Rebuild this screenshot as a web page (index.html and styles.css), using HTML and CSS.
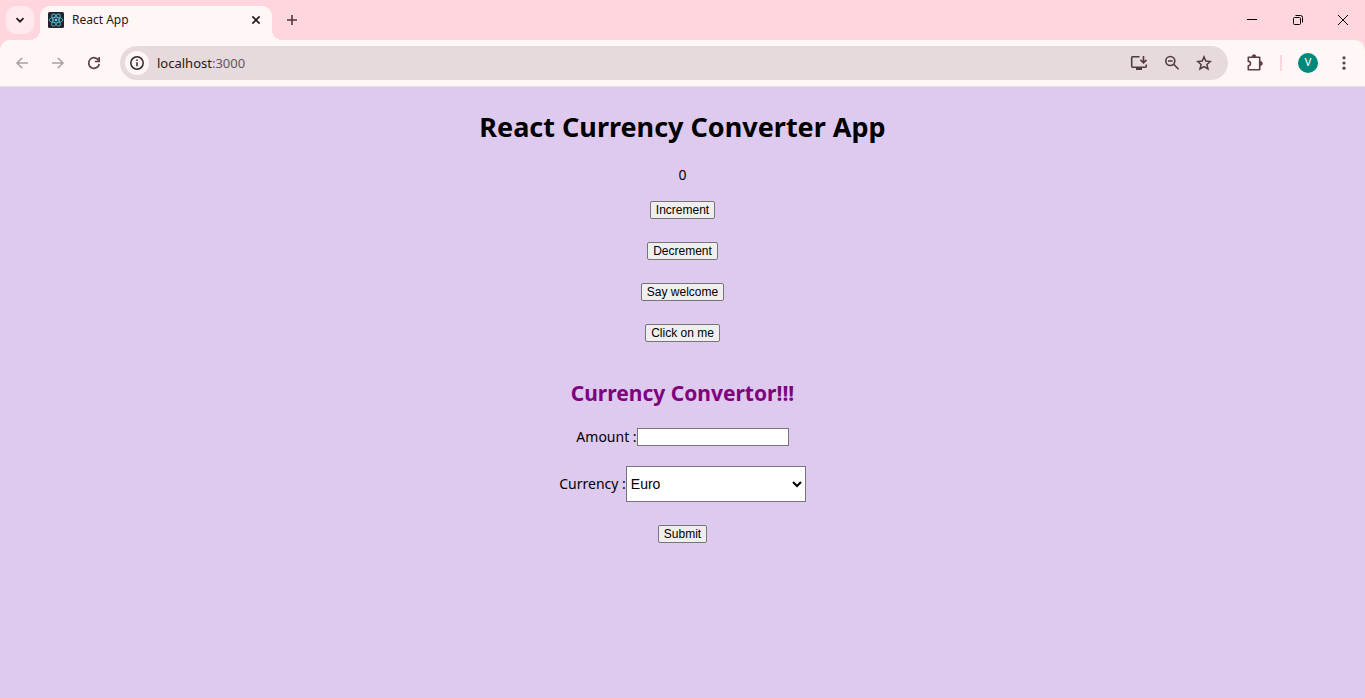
FILE: index.html
```
<!DOCTYPE html>
<html lang="en">
<head>
<meta charset="utf-8">
<title>React App</title>
<link rel="stylesheet" href="styles.css">
</head>
<body>
<header class="browser">
  <div class="tabstrip">
    <button class="tab-search" aria-label="Search tabs"><svg width="10" height="10" viewBox="0 0 10 10"><path d="M1.5 3.2 5 6.7l3.5-3.5" fill="none" stroke="#24191c" stroke-width="1.8"/></svg></button>
    <div class="tab">
      <svg class="favicon" width="16" height="16" viewBox="0 0 16 16"><rect width="16" height="16" rx="1.5" fill="#20232a"/><g fill="none" stroke="#4fb3cf" stroke-width=".9"><ellipse cx="8" cy="8" rx="6.8" ry="2.7"/><ellipse cx="8" cy="8" rx="6.8" ry="2.7" transform="rotate(60 8 8)"/><ellipse cx="8" cy="8" rx="6.8" ry="2.7" transform="rotate(120 8 8)"/></g><circle cx="8" cy="8" r="1.3" fill="#61dafb"/></svg>
      <span class="tab-title">React App</span>
      <button class="icon-button tab-close" aria-label="Close tab"><svg width="16" height="16" viewBox="0 0 16 16"><path d="m4.4 4.4 7.2 7.2m0-7.2-7.2 7.2" stroke="#24191c" stroke-width="1.6"/></svg></button>
    </div>
    <button class="icon-button new-tab" aria-label="New tab"><svg width="16" height="16" viewBox="0 0 16 16"><path d="M8 3v10M3 8h10" stroke="#50393f" stroke-width="1.6"/></svg></button>
    <div class="window-controls">
      <button aria-label="Minimize"><svg width="12" height="12" viewBox="0 0 12 12"><path d="M1 5.5h10" stroke="#000"/></svg></button>
      <button aria-label="Restore"><svg width="12" height="12" viewBox="0 0 12 12"><rect x="1.5" y="3.5" width="7" height="7" rx="1" fill="none" stroke="#000"/><path d="M3.5 1.5h5a2 2 0 0 1 2 2v5" fill="none" stroke="#000"/></svg></button>
      <button aria-label="Close"><svg width="12" height="12" viewBox="0 0 12 12"><path d="m1 1 10 10M11 1 1 11" stroke="#000"/></svg></button>
    </div>
  </div>
  <div class="toolbar">
    <nav class="nav">
      <button class="icon-button" aria-label="Back" disabled><svg width="16" height="16" viewBox="0 0 16 16"><path d="M14 8H3m5.3-5.3L3 8l5.3 5.3" fill="none" stroke="#aaa0a1" stroke-width="1.5"/></svg></button>
      <button class="icon-button" aria-label="Forward" disabled><svg width="16" height="16" viewBox="0 0 16 16"><path d="M2 8h11M7.700 2.700 13 8l-5.300 5.300" fill="none" stroke="#aaa0a1" stroke-width="1.5"/></svg></button>
      <button class="icon-button" aria-label="Reload"><svg width="16" height="16" viewBox="0 0 16 16"><path d="M12.700 5.600A5.300 5.300 0 1 0 13.200 9" fill="none" stroke="#5a3f46" stroke-width="1.7"/><path d="M13.200 2v4.500H8.800" fill="none" stroke="#5a3f46" stroke-width="1.7"/></svg></button>
    </nav>
    <div class="omnibox">
      <button class="site-info" aria-label="Site information"><svg width="16" height="16" viewBox="0 0 16 16"><circle cx="8" cy="8" r="6.200" fill="none" stroke="#332529" stroke-width="1.5"/><path d="M8 7.200v4M8 4.500v1.600" stroke="#332529" stroke-width="1.5"/></svg></button>
      <label class="url"><input type="text" value="localhost:3000" aria-label="Address"><span class="url-text" aria-hidden="true">localhost<span class="port">:3000</span></span></label>
      <button class="icon-button" aria-label="Install"><svg width="18" height="18" viewBox="0 0 18 18"><path d="M9.500 2.800H2.700a1 1 0 0 0-1 1v8.500a1 1 0 0 0 1 1h12.600a1 1 0 0 0 1-1V10.500" fill="none" stroke="#50393f" stroke-width="1.600"/><path d="M6 13h6v3H6z" fill="#50393f"/><path d="M13.500 2v6.700m-3-2.800 3 3 3-3" fill="none" stroke="#50393f" stroke-width="1.600"/></svg></button>
      <button class="icon-button" aria-label="Zoom"><svg width="16" height="16" viewBox="0 0 16 16"><circle cx="6.300" cy="6" r="4.500" fill="none" stroke="#50393f" stroke-width="1.600"/><path d="M4 6h4.600M9.600 9.300l5 5" stroke="#50393f" stroke-width="1.600"/></svg></button>
      <button class="icon-button" aria-label="Bookmark"><svg width="16" height="16" viewBox="0 0 16 16"><path d="m8 1.900 1.800 4.200 4.600.4-3.500 3 1.100 4.500L8 11.600 4 14l1.100-4.500-3.500-3 4.600-.4z" fill="none" stroke="#50393f" stroke-width="1.500"/></svg></button>
    </div>
    <div class="actions">
      <button class="icon-button" aria-label="Extensions"><svg width="18" height="18" viewBox="0 0 18 18"><path d="M2.300 3.300h11.400v12.400H2.300v-3.900a2.200 2.200 0 0 0 0-4.400z" fill="none" stroke="#5a3f46" stroke-width="1.600" stroke-linejoin="round"/><path d="M6 2.800a2 2 0 0 1 4 0zM14.300 7.500a2 2 0 0 1 0 4z" fill="#5a3f46" stroke="#5a3f46"/></svg></button>
      <span class="divider"></span>
      <button class="avatar" aria-label="Profile">V</button>
      <button class="icon-button menu" aria-label="Menu"><svg width="16" height="16" viewBox="0 0 16 16" fill="#5a3f46"><circle cx="8" cy="2.800" r="1.600"/><circle cx="8" cy="8" r="1.600"/><circle cx="8" cy="13.200" r="1.600"/></svg></button>
    </div>
  </div>
</header>
<main class="page">
  <h1 class="title">React Currency Converter App</h1>
  <output class="count">0</output>
  <div class="buttons">
    <button class="button">Increment</button>
    <button class="button">Decrement</button>
    <button class="button">Say welcome</button>
    <button class="button">Click on me</button>
  </div>
  <h2 class="subtitle">Currency Convertor!!!</h2>
  <form class="form">
    <div class="field"><label for="amount">Amount :</label><input class="amount" id="amount" type="text"></div>
    <div class="field"><label for="currency">Currency :</label><select class="currency" id="currency"><option>Euro</option></select></div>
    <button class="button submit" type="button">Submit</button>
  </form>
</main>
</body>
</html>
```
FILE: styles.css
```
* { box-sizing: border-box; }
body {
  margin: 0;
  min-height: 100vh;
  background: #decaee;
  color: #000;
  font: 14px/20px "Noto Sans", "Open Sans", sans-serif;
}
svg { display: block; flex: none; }
.browser { background: #ffd6de; }
.browser button {
  display: flex;
  align-items: center;
  justify-content: center;
  padding: 0;
  border: 0;
  background: none;
}
.tabstrip { display: flex; align-items: center; height: 40px; padding-left: 6px; }
.browser .tab-search { width: 28px; height: 28px; border-radius: 10px; background: #ffebee; }
.tab {
  position: relative;
  display: flex;
  align-items: center;
  align-self: flex-end;
  width: 232px;
  height: 34px;
  margin-left: 6px;
  padding: 0 8px 6px;
  border-radius: 10px 10px 0 0;
  background: #fff7f5;
}
.tab::before, .tab::after {
  content: "";
  position: absolute;
  bottom: 0;
  width: 10px;
  height: 10px;
}
.tab::before { right: 100%; background: radial-gradient(circle at 0 0, transparent 10px, #fff7f5 10px); }
.tab::after { left: 100%; background: radial-gradient(circle at 100% 0, transparent 10px, #fff7f5 10px); }
.tab-title { flex: 1; margin-left: 8px; color: #24191c; font: 12px/18px "Noto Sans", sans-serif; }
.new-tab { margin-left: 12px; }
.window-controls { display: flex; align-self: stretch; margin-left: auto; }
.window-controls button { width: 46px; }
.window-controls button:last-child { width: 44px; }
.toolbar {
  display: flex;
  align-items: center;
  height: 47px;
  border-bottom: 1px solid #efdce2;
  border-radius: 10px 10px 0 0;
  background: #fff7f5;
}
.nav { display: flex; gap: 20px; padding: 0 18px 0 14px; }
.omnibox {
  flex: 1;
  display: flex;
  align-items: center;
  gap: 16px;
  height: 34px;
  padding: 0 16px 0 5px;
  border-radius: 17px;
  background: #e7dadd;
}
.browser .site-info { width: 24px; height: 24px; border-radius: 50%; background: #fff7f5; }
.url { flex: 1; display: grid; margin-left: -8px; font: 13px/20px "Noto Sans", sans-serif; }
.url input, .url-text { grid-area: 1 / 1; }
.url input { min-width: 0; padding: 0; border: 0; background: none; color: transparent; font: inherit; }
.url-text { color: #24191c; pointer-events: none; }
.port { color: #66555a; }
.actions { display: flex; align-items: center; gap: 16px; padding: 0 13px 0 18px; }
.actions .menu { margin-left: 2px; }
.divider { width: 2px; height: 16px; background: #ffd6de; }
.browser .avatar {
  width: 20px;
  height: 20px;
  border-radius: 50%;
  background: #00897b;
  color: #fff;
  font: 11px/20px Roboto, sans-serif;
}
.page { display: flex; flex-direction: column; align-items: center; padding: 20px 16px; }
.title { margin: 0; font: bold 27px/40px "Noto Sans", sans-serif; }
.count { margin-top: 18px; }
.buttons { display: flex; flex-direction: column; align-items: center; gap: 23px; margin-top: 16px; }
.button {
  height: 18px;
  padding: 0 5px;
  border: 1px solid #767676;
  border-radius: 2px;
  background: #efefef;
  color: #000;
  font: 12px/16px "Liberation Sans", Arial, sans-serif;
}
.subtitle { margin: 36px 0 0; color: #800080; font: bold 21px/30px "Noto Sans", sans-serif; }
.form { display: flex; flex-direction: column; align-items: center; margin-top: 19px; }
.field { display: flex; align-items: center; margin-bottom: 19px; }
.amount { width: 152px; height: 18px; padding: 0 2px; border: 1px solid #767676; background: #fff; font: 12px/16px "Liberation Sans", Arial, sans-serif; }
.currency { width: 180px; height: 36px; padding: 0; border: 1px solid #767676; border-radius: 0; background-color: #fff; color: #000; font: 14px/20px "Liberation Sans", Arial, sans-serif; }
.submit { margin-top: 4px; }
```
